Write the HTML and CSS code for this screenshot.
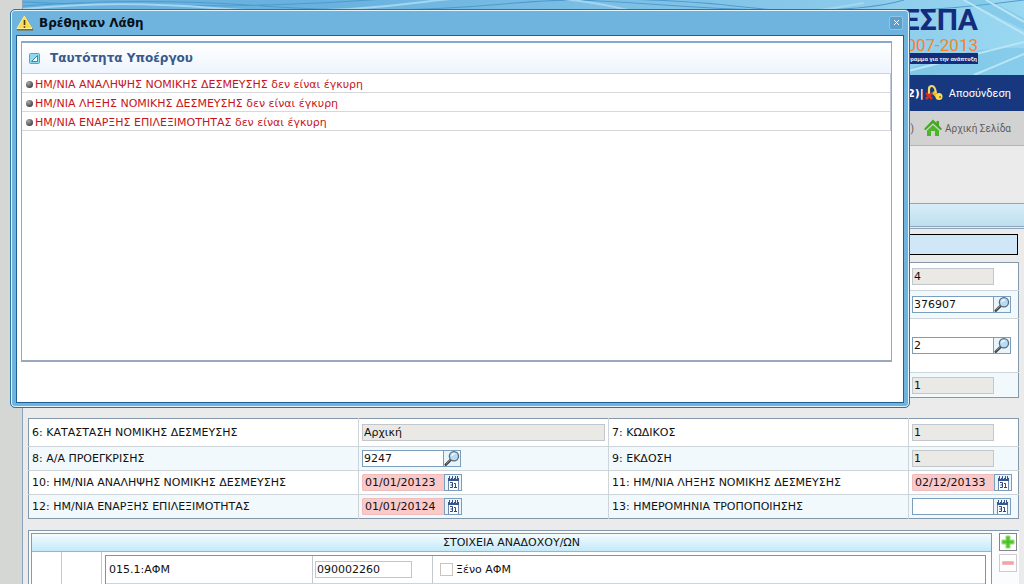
FILE: index.html
```html
<!DOCTYPE html>
<html lang="el">
<head>
<meta charset="utf-8">
<meta name="viewport" content="width=device-width, initial-scale=1">
<title>Βρέθηκαν Λάθη</title>
<link rel="stylesheet" href="styles.css">
</head>
<body>
<svg class="defs" aria-hidden="true">
  <symbol id="lens" viewBox="0 0 17 17">
    <path d="M1.5 15.5 7 10" stroke="#444" stroke-width="3" stroke-linecap="round"/>
    <path d="M2 14.5 7 9.5" stroke="#999" stroke-width="1"/>
    <circle cx="10.7" cy="6" r="5.2" fill="#b5dcf4" stroke="#5b6b7c" stroke-width="1.5"/>
    <path d="M8 5.5Q9 3 12 3" stroke="#fff" stroke-width="1.3" fill="none"/>
  </symbol>
  <symbol id="cal" viewBox="0 0 16 15">
    <path d="M3.5 4v11M13.5 4v11" stroke="#7187aa"/>
    <path d="M4 5h9v10H4z" fill="#fff"/>
    <path d="M3 3h11v3H3z" fill="#38568c"/>
    <path d="M4.5 1v2M7.500 1v2M10.500 1v2M12.500 1v2" stroke="#38568c"/>
    <path d="M5.500 3v1M8.500 3v1M11.500 3v1" stroke="#dce6f5"/>
    <path d="M5 7.500h2.500v5H5M5.500 10h2M9 8.500h1.500v4M9 12.500h3" fill="none" stroke="#2a477f"/>
  </symbol>
</svg>

<div class="page">
  <header class="banner">
    <svg class="waves" viewBox="0 0 1000 75" preserveAspectRatio="none" aria-hidden="true">
      <path d="M0 6Q120-3 240 6T480 4T720 7T1000 0M0 2Q200 10 330 1T640 5T880 0" fill="none" stroke="#4f9bce" stroke-width="1"/>
      <path d="M0 9Q90 0 190 8T400 2T600 9T840 3" fill="none" stroke="#a5d5ef" stroke-width="2"/>
      <path d="M870 75Q940 45 1000 48V75zM940 0 1000 30V18L965 0z" fill="#65b7df" opacity=".35"/>
      <path d="M880 72 1000 42M940 0 1000 34M962 0 1000 22M950 75 1000 54" fill="none" stroke="#b9e5f6" stroke-width="2"/>
    </svg>
    <div class="logo">
      <strong>ΕΣΠΑ</strong>
      <span class="years">2007-2013</span>
      <span class="motto">πρόγραμμα για την ανάπτυξη</span>
    </div>
  </header>
  <nav class="userbar">
    <span class="user">2)|</span>
    <a href="#">
      <svg width="18" height="18" viewBox="0 0 18 18" aria-hidden="true">
        <path d="m8 8 6 6" stroke="#e9b723" stroke-width="3.5"/>
        <path d="M4 10V5q0-3 3-3t4 7" fill="none" stroke="#f4d866" stroke-width="2.2"/>
        <circle cx="14" cy="12.5" r="3.500" fill="#f8dc55"/><circle cx="15" cy="13" r="1" fill="#9b6b12"/>
        <path d="m1 9 6 6M7 9l-6 6" stroke="#d92c20" stroke-width="2.500"/>
      </svg>
      Αποσύνδεση
    </a>
  </nav>
  <nav class="homebar">
    <span class="user">)</span>
    <a href="#">
      <svg width="18" height="18" viewBox="0 0 18 18" aria-hidden="true">
        <path d="M9 .5 12.5 4V2H15v4.5L18 10l-1.4 1.2L9 4.2 1.4 11.2 0 10z" fill="#42a91f"/>
        <path d="m9 6 6 5.5V17h-4v-5H7v5H3v-5.500z" fill="#4db528"/>
      </svg>
      Αρχική Σελίδα
    </a>
  </nav>
  <div class="strip"></div>

  <main class="form">
    <div class="notice"></div>

    <table class="grid upper">
      <colgroup><col class="c1"><col class="c2"><col class="c3"><col></colgroup>
      <tr><td></td><td></td><td></td><td><input class="box" aria-label="Κωδικός" value="4" readonly></td></tr>
      <tr><td></td><td></td><td></td><td><span class="pick"><input aria-label="Έργο" value="376907"><button aria-label="Αναζήτηση"><svg><use href="#lens"/></svg></button></span></td></tr>
      <tr class="tall"><td></td><td></td><td></td><td><span class="pick"><input aria-label="Υποέργο" value="2"><button aria-label="Αναζήτηση"><svg><use href="#lens"/></svg></button></span></td></tr>
      <tr class="short"><td></td><td></td><td></td><td><input class="box" aria-label="Έκδοση" value="1" readonly></td></tr>
    </table>

    <table class="grid lower">
      <colgroup><col class="c1"><col class="c2"><col class="c3"><col></colgroup>
      <tr class="first">
        <td><label for="f6">6: ΚΑΤΑΣΤΑΣΗ ΝΟΜΙΚΗΣ ΔΕΣΜΕΥΣΗΣ</label></td>
        <td><input class="box wide" id="f6" value="Αρχική" readonly></td>
        <td><label for="f7">7: ΚΩΔΙΚΟΣ</label></td>
        <td><input class="box" id="f7" value="1" readonly></td>
      </tr>
      <tr>
        <td><label for="f8">8: Α/Α ΠΡΟΕΓΚΡΙΣΗΣ</label></td>
        <td><span class="pick"><input id="f8" value="9247"><button aria-label="Αναζήτηση"><svg><use href="#lens"/></svg></button></span></td>
        <td><label for="f9">9: ΕΚΔΟΣΗ</label></td>
        <td><input class="box" id="f9" value="1" readonly></td>
      </tr>
      <tr>
        <td><label for="f10">10: ΗΜ/ΝΙΑ ΑΝΑΛΗΨΗΣ ΝΟΜΙΚΗΣ ΔΕΣΜΕΥΣΗΣ</label></td>
        <td><span class="pick invalid"><input id="f10" value="01/01/20123"><button aria-label="Ημερολόγιο"><svg><use href="#cal"/></svg></button></span></td>
        <td><label for="f11">11: ΗΜ/ΝΙΑ ΛΗΞΗΣ ΝΟΜΙΚΗΣ ΔΕΣΜΕΥΣΗΣ</label></td>
        <td><span class="pick invalid"><input id="f11" value="02/12/20133"><button aria-label="Ημερολόγιο"><svg><use href="#cal"/></svg></button></span></td>
      </tr>
      <tr>
        <td><label for="f12">12: ΗΜ/ΝΙΑ ΕΝΑΡΞΗΣ ΕΠΙΛΕΞΙΜΟΤΗΤΑΣ</label></td>
        <td><span class="pick invalid"><input id="f12" value="01/01/20124"><button aria-label="Ημερολόγιο"><svg><use href="#cal"/></svg></button></span></td>
        <td><label for="f13">13: ΗΜΕΡΟΜΗΝΙΑ ΤΡΟΠΟΠΟΙΗΣΗΣ</label></td>
        <td><span class="pick"><input id="f13" value=""><button aria-label="Ημερολόγιο"><svg><use href="#cal"/></svg></button></span></td>
      </tr>
    </table>

    <section class="contractors">
      <div class="panel">
        <h2>ΣΤΟΙΧΕΙΑ ΑΝΑΔΟΧΟΥ/ΩΝ</h2>
        <div class="record">
          <div class="gutter first"></div>
          <div class="gutter"></div>
          <div class="fields">
            <label class="name" for="afm">015.1:ΑΦΜ</label>
            <div class="value"><input id="afm" value="090002260"></div>
            <label class="check"><input type="checkbox">Ξένο ΑΦΜ</label>
          </div>
        </div>
      </div>
      <div class="tools">
        <button class="add" aria-label="Προσθήκη"><svg width="14" height="14" viewBox="0 0 14 14"><path d="M5 1h4v4h4v4H9v4H5V9H1V5h4z" fill="#62cf3d" stroke="#8bdc70"/><path d="M7 2v10M2 7h10" stroke="#42b624"/></svg></button>
        <button class="remove" aria-label="Διαγραφή"><svg width="14" height="14" viewBox="0 0 14 14"><path d="M1.500 5.500h11v3h-11z" fill="#f3a5a5" stroke="#efb9b9"/></svg></button>
      </div>
    </section>
  </main>
</div>

<div class="dialog" role="dialog" aria-labelledby="dlg-title">
  <div class="titlebar">
    <svg width="18" height="16" viewBox="0 0 18 16" aria-hidden="true">
      <path d="M9 1.500 17 15H1z" fill="#8a7118" stroke="#75662c" stroke-linejoin="round"/>
      <path d="M8.500 1 16 13.500H1z" fill="#fbdc4b" stroke="#fff0a0" stroke-linejoin="round"/>
      <path d="M8.500 5v5M8.500 11.200v1.500" stroke="#4a3d10" stroke-width="1.600"/>
    </svg>
    <h1 id="dlg-title">Βρέθηκαν Λάθη</h1>
    <button class="close" aria-label="Κλείσιμο"><svg width="7" height="7" viewBox="0 0 7 7"><path d="m1 1 5 5M6 1 1 6" stroke="#fff" stroke-width="1"/></svg></button>
  </div>
  <div class="content">
    <div class="errors">
      <div class="errors-head">
        <svg width="11" height="11" viewBox="0 0 11 11" aria-hidden="true"><rect x=".5" y=".5" width="10" height="10" rx="1" fill="#8edaf0" stroke="#4ba9c8"/><path d="M2.500 8.500 8.500 2.500v6z" fill="#fff" stroke="#3689ad"/></svg>
        <h2>Ταυτότητα Υποέργου</h2>
      </div>
      <ul>
        <li>ΗΜ/ΝΙΑ ΑΝΑΛΗΨΗΣ ΝΟΜΙΚΗΣ ΔΕΣΜΕΥΣΗΣ δεν είναι έγκυρη</li>
        <li>ΗΜ/ΝΙΑ ΛΗΞΗΣ ΝΟΜΙΚΗΣ ΔΕΣΜΕΥΣΗΣ δεν είναι έγκυρη</li>
        <li>ΗΜ/ΝΙΑ ΕΝΑΡΞΗΣ ΕΠΙΛΕΞΙΜΟΤΗΤΑΣ δεν είναι έγκυρη</li>
      </ul>
    </div>
  </div>
</div>
</body>
</html>
```
FILE: styles.css
```css
* { box-sizing: border-box; }
html, body { height: 100%; }
body {
  margin: 0;
  overflow: hidden;
  position: relative;
  background: #d4d7d3;
  font-family: Verdana, "DejaVu Sans", sans-serif;
  font-size: 11px;
  color: #111;
}
input, button { font: inherit; color: inherit; margin: 0; }
button { padding: 0; cursor: pointer; }
h1, h2 { margin: 0; }
a { text-decoration: none; color: inherit; }
.defs { display: none; }

.page {
  margin-left: 22px;
  border-left: 1px solid #8ba3bb;
  background: #ebebeb;
  min-height: 100%;
}

/* Banner */
.banner {
  position: relative;
  height: 75px;
  background: linear-gradient(90deg, #69b2df 0 30%, #8ccbeb 85%, #9ad8f1);
  display: flex;
  justify-content: flex-end;
  padding: 3px 46px 0 0;
}
.waves { position: absolute; inset: 0; width: 100%; height: 100%; }
.logo {
  position: relative;
  display: flex;
  flex-direction: column;
  align-items: flex-end;
  color: #132d7c;
  white-space: nowrap;
}
.logo strong { font: bold 30px/34px Roboto, "Open Sans", sans-serif; }
.years { font: 17px/16px Roboto, sans-serif; color: #f5842a; }
.motto {
  padding: 0 1px;
  font: bold 6px/11px Roboto, "Open Sans", sans-serif;
  background: #132d7c;
  color: #e8f2fc;
}

/* Bars under the banner */
.userbar, .homebar {
  display: flex;
  justify-content: flex-end;
  align-items: center;
  font-family: Tahoma, Roboto, sans-serif;
}
.userbar { height: 36px; padding-right: 13px; gap: 1px; background: #17387e; color: #fff; }
.userbar .user { font-family: Verdana, "DejaVu Sans", sans-serif; font-weight: bold; }
.userbar a { display: flex; align-items: center; gap: 6px; }
.homebar {
  height: 35px;
  padding-right: 13px;
  gap: 10px;
  background: #d2d2d2;
  border-bottom: 1px solid #b4b4b4;
  color: #5c5c5c;
  font-size: 10px;
}
.homebar a { display: flex; align-items: center; gap: 3px; }
.strip {
  margin-top: 57px;
  height: 24px;
  border: solid #8ea6bb;
  border-width: 1px 0;
  background: linear-gradient(#d9edf9, #bddfed);
}

/* Form */
.form {
  margin-top: 1px;
  border-top: 1px solid #8ea6bb;
  padding: 5px 5px 0;
}
.notice { height: 21px; margin-right: 1px; border: 1px solid #000; background: #cfe7f7; }
.grid {
  width: 100%;
  table-layout: fixed;
  border-collapse: collapse;
  border: 1px solid #8497ab;
  background: #fff;
}
.grid .c1 { width: 330px; }
.grid .c2 { width: 250px; }
.grid .c3 { width: 300px; }
.grid td { height: 24px; padding: 0 3px; }
.grid td + td { border-left: 1px solid #cdd4da; }
.grid tr + tr td { border-top: 1px solid #cdd4da; }
.grid tr:nth-child(even) { background: #f1f9fd; }
.grid label { white-space: nowrap; }
.grid .pick, .grid .box { display: flex; }
.upper { margin-top: 7px; }
.upper td { height: 28px; }
.upper .tall td { height: 54px; }
.upper .short td { height: 25px; }
.lower { margin-top: 20px; }
.lower .first td { height: 28px; }

.box, .pick input {
  width: 82px;
  height: 17px;
  padding: 0 1px;
  border: 1px solid #7b9ebd;
  background: #fff;
  border-radius: 0;
}
.box { background: #ebe9e6; border-color: #c1c7cb; }
.grid .wide { width: 100%; }
.pick button {
  width: 18px;
  height: 17px;
  margin-left: -1px;
  border: 1px solid #7b9ebd;
  background: #eaf4fb;
  display: flex;
}
.pick svg { width: 16px; height: 15px; }
.pick.invalid input {
  width: 83px;
  padding: 0 2px;
  border-color: #f0bcbc;
  border-right: 0;
  border-radius: 2px;
  background: #facaca;
}

/* Contractors */
.contractors {
  margin-top: 11px;
  padding: 2px 2px 0;
  border: 1px solid #8497ab;
  border-width: 1px 0 0 1px;
  display: flex;
  gap: 7px;
  background: #fbfcfd;
}
.panel { flex: 1; border: 1px solid #7e9cb2; border-bottom: 0; background: #fff; }
.panel h2 {
  height: 18px;
  border-bottom: 1px solid #93b7cc;
  background: linear-gradient(#f4fcff, #c4e9f9);
  font-size: 11px;
  font-weight: normal;
  line-height: 18px;
  text-align: center;
}
.record { display: flex; padding-right: 5px; }
.gutter { width: 40px; height: 50px; border-right: 1px solid #c3c9ce; }
.gutter.first { width: 30px; }
.fields {
  flex: 1;
  display: grid;
  grid-template-columns: 206px 120px 1fr;
  align-items: start;
  height: 50px;
  margin: 3px 0 0 3px;
  border: 1px solid #8b9093;
  border-bottom: 0;
}
.fields > * { height: 28px; display: flex; align-items: center; padding: 0 3px; border-bottom: 1px solid #cdd4da; }
.fields > * + * { border-left: 1px solid #c3c9ce; }
.fields .value { padding-left: 2px; }
.value input { width: 97px; height: 17px; padding: 0 1px; border: 1px solid #c5c5c5; }
.check { gap: 3px; }
.fields .check { padding-left: 7px; }
.check input { appearance: none; width: 13px; height: 13px; margin: 0; border: 1px solid #c8c5be; background: #fff; }
.tools { width: 18px; display: flex; flex-direction: column; gap: 3px; }
.tools button {
  width: 18px;
  height: 18px;
  display: grid;
  place-items: center;
  border: 1px solid #86868a;
  background: #fff;
}
.tools .remove { border-color: #cfcccf; }

/* Error dialog */
.dialog {
  position: absolute;
  top: 9px;
  left: 10px;
  right: 114px;
  padding: 0 5px 4px;
  border: 1px solid #2f719f;
  border-radius: 5px;
  background: #6fb4df;
  box-shadow: inset 0 0 0 1px #e4f4fc;
}
.titlebar {
  height: 25px;
  display: flex;
  align-items: center;
  gap: 5px;
  padding-right: 1px;
}
.titlebar h1 { flex: 1; font-size: 12px; line-height: 22px; color: #08101a; }
.close {
  width: 14px;
  height: 14px;
  display: grid;
  place-items: center;
  border: 1px solid #8fc4e4;
  border-radius: 2px;
  background: #5a9fcd;
}
.content { border: 1px solid #1f5f92; background: #fff; padding: 5px 11px 40px 4px; }
.errors {
  min-height: 321px;
  border: 1px solid #98a9bd;
  border-top: 2px solid #84a8ce;
  border-bottom-width: 2px;
}
.errors-head {
  height: 31px;
  display: flex;
  align-items: center;
  gap: 10px;
  padding-left: 7px;
  border-bottom: 1px solid #c9d4e2;
  background: linear-gradient(#fff, #eef4fd);
}
.errors h2 { font-size: 12px; color: #36598f; }
.errors ul {
  margin: 0;
  padding: 0;
  list-style: none;
  border-right: 1px solid #c0cad6;
}
.errors li {
  height: 19px;
  display: flex;
  align-items: center;
  gap: 2px;
  padding: 2px 0 0 4px;
  border-bottom: 1px solid #d8d8dc;
  color: #c8141c;
}
.errors li::before {
  content: "";
  width: 7px;
  height: 7px;
  border-radius: 50%;
  background: radial-gradient(circle at 35% 30%, #aaa, #444 75%);
}
```
